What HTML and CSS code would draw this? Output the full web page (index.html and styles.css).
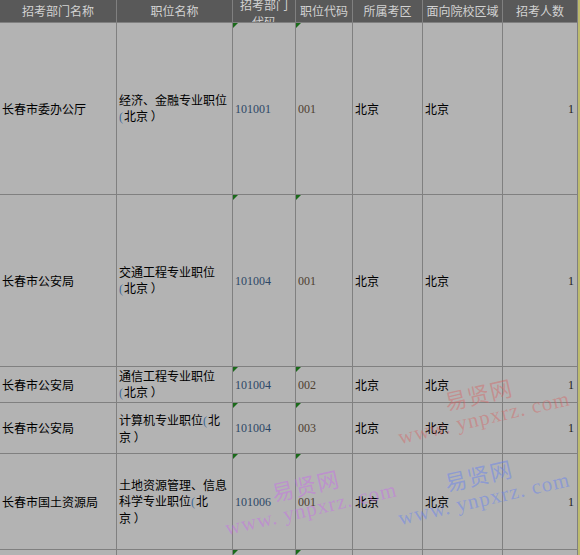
FILE: index.html
```html
<!DOCTYPE html>
<html lang="zh-CN">
<head>
<meta charset="utf-8">
<title>招考职位表</title>
<link rel="stylesheet" href="styles.css">
</head>
<body>
<div class="sheet">
  <div class="grid">
    <div class="h">招考部门名称</div>
    <div class="h">职位名称</div>
    <div class="h h2"><span>招考部门<br>代码</span></div>
    <div class="h">职位代码</div>
    <div class="h">所属考区</div>
    <div class="h">面向院校区域</div>
    <div class="h">招考人数</div>

    <div class="c">长春市委办公厅</div>
    <div class="c"><div class="t">经济、金融专业职位<br><span class="p">(</span>北京 ）</div></div>
    <div class="c n code flag">101001</div>
    <div class="c n pos flag">001</div>
    <div class="c">北京</div>
    <div class="c">北京</div>
    <div class="c n r">1</div>

    <div class="c">长春市公安局</div>
    <div class="c"><div class="t">交通工程专业职位<br><span class="p">(</span>北京 ）</div></div>
    <div class="c n code flag">101004</div>
    <div class="c n pos flag">001</div>
    <div class="c">北京</div>
    <div class="c">北京</div>
    <div class="c n r">1</div>

    <div class="c">长春市公安局</div>
    <div class="c"><div class="t">通信工程专业职位<br><span class="p">(</span>北京 ）</div></div>
    <div class="c n code flag">101004</div>
    <div class="c n pos flag">002</div>
    <div class="c">北京</div>
    <div class="c">北京</div>
    <div class="c n r">1</div>

    <div class="c">长春市公安局</div>
    <div class="c"><div class="t">计算机专业职位<span class="p">(</span>北<br>京 ）</div></div>
    <div class="c n code flag">101004</div>
    <div class="c n pos flag">003</div>
    <div class="c">北京</div>
    <div class="c">北京</div>
    <div class="c n r">1</div>

    <div class="c">长春市国土资源局</div>
    <div class="c"><div class="t">土地资源管理、信息<br>科学专业职位<span class="p">(</span>北<br>京 ）</div></div>
    <div class="c n code flag">101006</div>
    <div class="c n pos flag">001</div>
    <div class="c">北京</div>
    <div class="c">北京</div>
    <div class="c n r">1</div>

    <div class="c"></div>
    <div class="c"></div>
    <div class="c flag"></div>
    <div class="c flag"></div>
    <div class="c"></div>
    <div class="c"></div>
    <div class="c"></div>
  </div>

  <div class="wm wm-red"><span class="wm-cn">易贤网</span><span class="wm-en">www. ynpxrz. com</span></div>
  <div class="wm wm-purple"><span class="wm-cn">易贤网</span><span class="wm-en">www. ynpxrz. com</span></div>
  <div class="wm wm-blue"><span class="wm-cn">易贤网</span><span class="wm-en">www. ynpxrz. com</span></div>
</div>
</body>
</html>
```

FILE: styles.css
```css
html, body {
  margin: 0;
  padding: 0;
  background: #b3b3b3;
  overflow: hidden;
}

.sheet {
  position: relative;
  width: 580px;
  height: 555px;
  overflow: hidden;
}

.grid {
  display: grid;
  grid-template-columns: 116px 115px 62px 56px 69px 79px 74px;
  grid-template-rows: 22px 171px 171px 35px 50px 95px 40px;
  gap: 1px;
  background: #808080;
  padding-right: 1px;
  border-right: 2px solid #bdbb6c;
  width: 577px;
  font-family: "Noto Sans CJK SC", "Noto Sans", sans-serif;
  font-size: 12px;
}

.h {
  background: #595959;
  color: #d2d2d2;
  display: flex;
  align-items: center;
  justify-content: center;
  line-height: 14px;
  overflow: hidden;
  white-space: nowrap;
}

.h2 {
  padding-top: 3px;
  box-sizing: border-box;
}

.h2 span {
  display: block;
  text-align: center;
  line-height: 17px;
}

.c {
  position: relative;
  background: #b3b3b3;
  color: #000;
  display: flex;
  align-items: center;
  padding: 0 2px;
  line-height: 16px;
  white-space: nowrap;
  overflow: hidden;
}

.t {
  display: block;
  white-space: nowrap;
}

.n {
  font-family: "Liberation Serif", "Times New Roman", serif;
  font-size: 12px;
}

.code { color: #2d4866; }
.pos { color: #4e4030; }

.r {
  justify-content: flex-end;
  padding-right: 3px;
  color: #1c1c1c;
}

.p {
  font-family: "Liberation Serif", serif;
  color: #3c6a9a;
  margin-right: 1px;
}

.flag::before {
  content: "";
  position: absolute;
  left: 0;
  top: 0;
  width: 0;
  height: 0;
  border-top: 5px solid #1a6a1a;
  border-right: 5px solid transparent;
}

.wm {
  position: absolute;
  display: flex;
  flex-direction: column;
  align-items: center;
  transform: translate(-50%, -50%) rotate(-13deg);
  pointer-events: none;
  white-space: nowrap;
}

.wm-cn {
  font-family: "Noto Sans CJK SC", serif;
  font-size: 22px;
  line-height: 26px;
  letter-spacing: 1px;
}

.wm-en {
  font-family: "Liberation Serif", serif;
  font-size: 21px;
  line-height: 24px;
  letter-spacing: 1px;
}

.wm-red {
  left: 481px;
  top: 405px;
  color: rgba(215, 95, 95, 0.42);
}

.wm-blue {
  left: 481px;
  top: 486px;
  color: rgba(95, 125, 245, 0.45);
}

.wm-purple {
  left: 308px;
  top: 496px;
  color: rgba(200, 105, 235, 0.45);
}
```
